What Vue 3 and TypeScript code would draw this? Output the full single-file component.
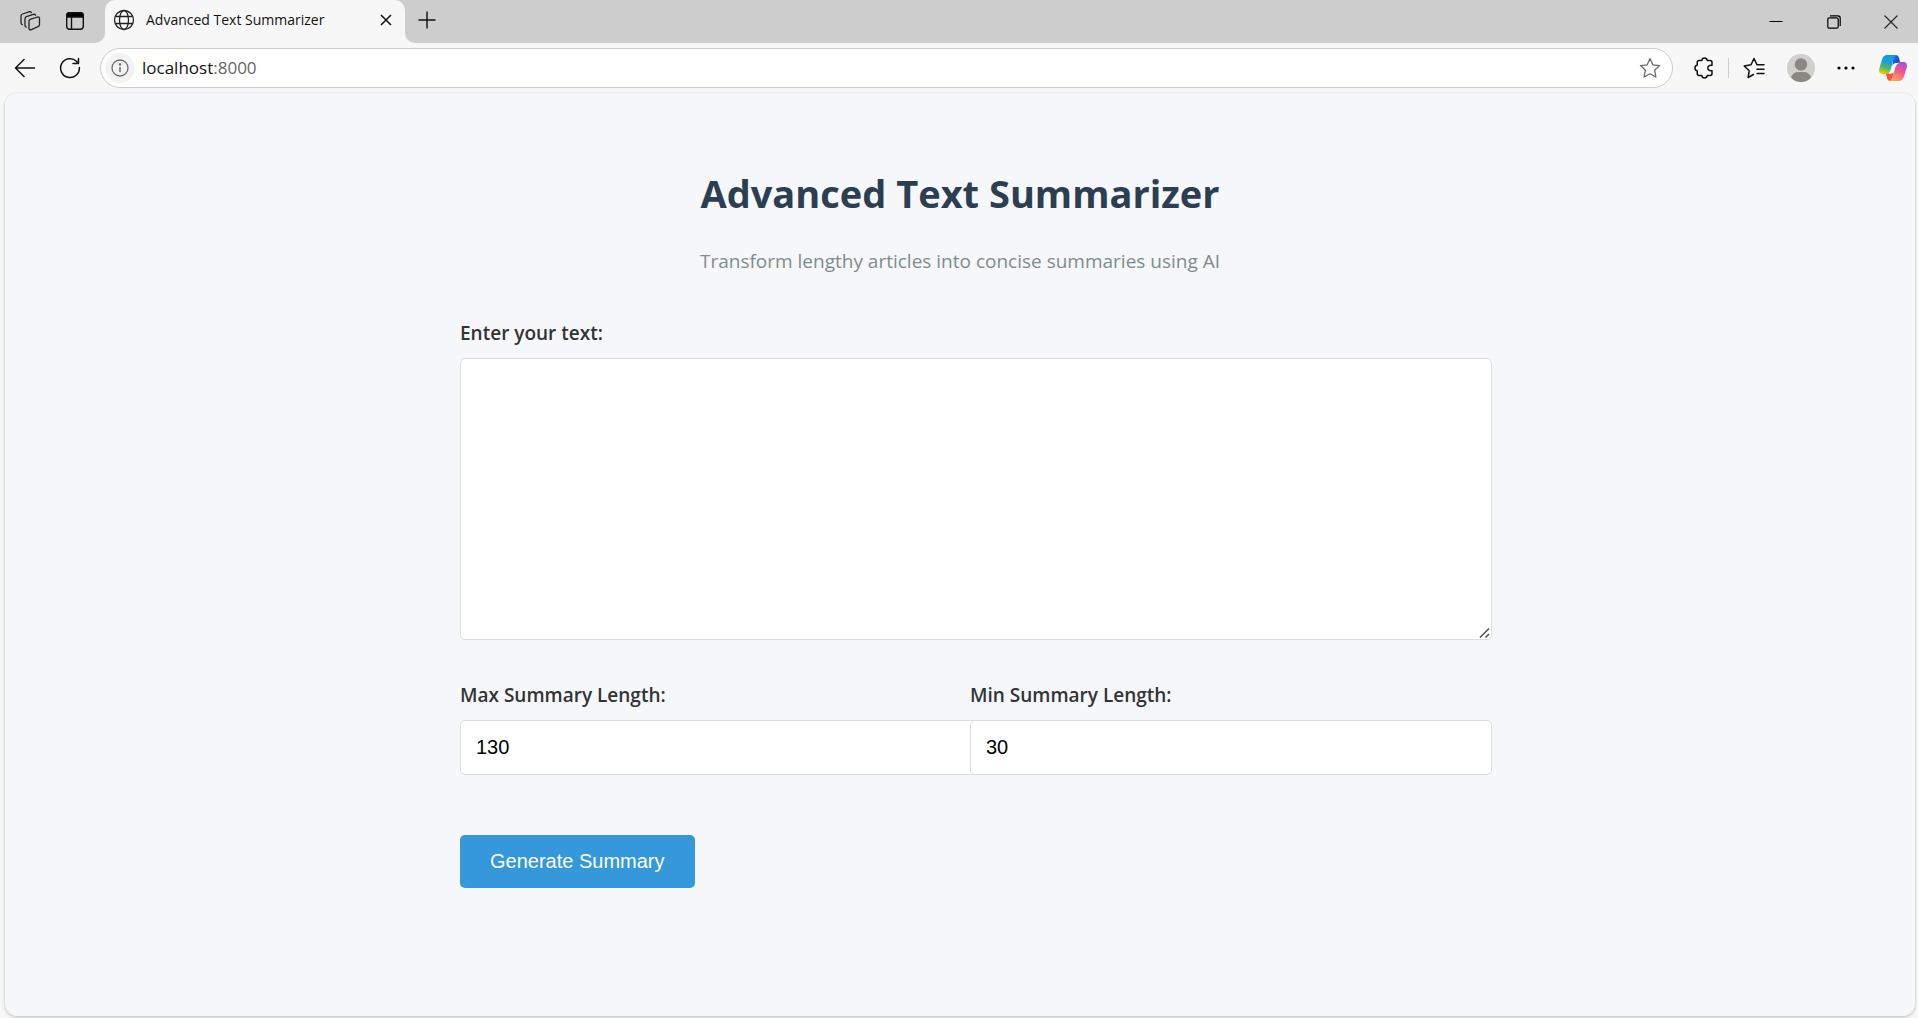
<script setup lang="ts">
import { ref } from 'vue'

const text = ref<string>('')
const maxLength = ref<number>(130)
const minLength = ref<number>(30)
</script>

<template>
  <div class="browser">
    <header class="strip">
      <div class="strip-left">
        <button class="icon-btn" aria-label="Workspaces">
          <svg width="22" height="22" viewBox="0 0 22 22" fill="none" stroke="#222" stroke-width="1.3" stroke-linejoin="round" stroke-linecap="round">
            <path d="M11.2 9.4 18.6 7Q20.5 6.600 20.500 8.500V14.500Q20.500 16 19 16.700L12.500 19.600Q10.200 20.600 10 18.400V11.200Q10 9.900 11.200 9.400Z" />
            <path d="M16.500 5.200Q15.900 3.900 14.300 4.400L7.500 6.700Q6 7.300 6 8.900V15.500Q6 17 7.300 17.200" />
            <path d="M12.300 2.600Q11.700 1.300 10 1.800L3.500 4Q2 4.600 2 6.200V12.800Q2 14.300 3.300 14.600" />
          </svg>
        </button>
        <button class="icon-btn" aria-label="Tab actions menu">
          <svg width="20" height="20" viewBox="0 0 20 20" fill="none" stroke="#111" stroke-width="1.400">
            <rect x="1.700" y="1.700" width="16.600" height="16.600" rx="3" />
            <path d="M1.700 6V4.500Q2 1.700 4.500 1.700H15.500Q18 1.700 18.300 4.500V6Z" fill="#000" />
            <path d="M6.500 6V18" />
          </svg>
        </button>
      </div>
      <div class="tab-cell">
        <div class="tab">
          <svg width="22" height="22" viewBox="0 0 22 22" fill="none" stroke="#222" stroke-width="1.300">
            <circle cx="11" cy="11" r="9.500" />
            <ellipse cx="11" cy="11" rx="4.500" ry="9.500" />
            <path d="M2.400 7.500H19.600M2.400 14.500H19.600" />
          </svg>
          <span class="tab-title">Advanced Text Summarizer</span>
          <button class="tab-close" aria-label="Close tab">
            <svg width="12" height="12" viewBox="0 0 12 12" stroke="#111" stroke-width="1.500"><path d="M1 1 11 11M11 1 1 11" /></svg>
          </button>
        </div>
      </div>
      <div class="strip-right">
        <button class="new-tab" aria-label="New tab">
          <svg width="18" height="18" viewBox="0 0 18 18" stroke="#111" stroke-width="1.400"><path d="M9 .500V17.500M.500 9H17.500" /></svg>
        </button>
        <div class="window-controls">
          <button aria-label="Minimize"><svg width="14" height="14" viewBox="0 0 14 14" stroke="#000"><path d="M.500 6.500H13.500" /></svg></button>
          <button aria-label="Restore">
            <svg width="14" height="14" viewBox="0 0 14 14" fill="none" stroke="#000" stroke-width="1.200">
              <rect x=".800" y="2.800" width="10.400" height="10.400" rx="1.500" /><path d="M3 .800H11Q13.200 .800 13.200 3V11" />
            </svg>
          </button>
          <button aria-label="Close"><svg width="14" height="14" viewBox="0 0 14 14" stroke="#222" stroke-width="1.100"><path d="M.500 .500 13.500 13.500M13.500 .500 .500 13.500" /></svg></button>
        </div>
      </div>
    </header>

    <nav class="toolbar">
      <button class="tool" aria-label="Back">
        <svg width="22" height="20" viewBox="0 0 22 20" fill="none" stroke="#111" stroke-width="1.500" stroke-linecap="round" stroke-linejoin="round"><path d="M20.500 10H1.500M10 1.500 1.500 10 10 18.500" /></svg>
      </button>
      <button class="tool" aria-label="Refresh">
        <svg width="22" height="22" viewBox="0 0 22 22" fill="none" stroke="#111" stroke-width="1.500" stroke-linecap="round" stroke-linejoin="round"><path d="M20.400 10.500A9.400 9.400 0 1 1 17.500 4.300L19 6.200M19.500 1.500V6.500H14" /></svg>
      </button>
      <div class="address">
        <button class="info" aria-label="Site information">
          <svg width="18" height="18" viewBox="0 0 18 18" fill="none" stroke="#6b6b6b" stroke-width="1.300"><circle cx="9" cy="9" r="8" /><path d="M9 8V13" stroke-width="1.500" /><circle cx="9" cy="5.500" r=".600" fill="#6b6b6b" /></svg>
        </button>
        <span class="url">localhost<span class="port">:8000</span></span>
        <button class="favourite" aria-label="Add to favourites">
          <svg width="22" height="22" viewBox="0 0 22 22" fill="none" stroke="#6b6b6b" stroke-width="1.300" stroke-linejoin="round"><path d="M11 1.500 13.800 7.800 20.600 8.600 15.600 13.200 16.900 20 11 16.700 5.100 20 6.400 13.200 1.400 8.600 8.200 7.800Z" /></svg>
        </button>
      </div>
      <div class="actions">
        <button class="tool" aria-label="Extensions">
          <svg width="20" height="22" viewBox="0 0 20 22" fill="none" stroke="#111" stroke-width="1.500" stroke-linejoin="round"><path d="M5 3.500H7.800Q8 1 10.500 1T13.200 3.500H16Q18 3.500 18 5.500V8.300Q13.800 7.900 13.800 11T18 13.700V16.500Q18 18.500 16 18.500H13.200Q13 21 10.500 21T7.800 18.500H5Q3.200 18.500 3.200 16.500V13.700Q1 13.500 1 11T3.200 8.300V5.500Q3.200 3.500 5 3.500Z" /></svg>
        </button>
        <span class="divider"></span>
        <button class="tool" aria-label="Favourites">
          <svg width="22" height="22" viewBox="0 0 22 22" fill="none" stroke="#111" stroke-width="1.500" stroke-linejoin="round" stroke-linecap="round"><path d="M10.500 17.500 5.100 20.500 6.200 13.800 1.200 9 8 7.800 11 1.500 14 7.800H21M14 12.200H21M14 16.600H21" /></svg>
        </button>
        <button class="tool" aria-label="Profile">
          <svg width="28" height="28" viewBox="0 0 28 28"><circle cx="14" cy="14" r="14" fill="#d2d0cc" /><circle cx="14" cy="10.500" r="6.200" fill="#8c8783" /><path d="M4 23.500Q6 18 11 18H17Q22 18 24 23.500Q20 28 14 28T4 23.500Z" fill="#8c8783" /></svg>
        </button>
        <button class="tool" aria-label="Settings and more">
          <svg width="18" height="4" viewBox="0 0 18 4"><circle cx="2" cy="2" r="1.600" /><circle cx="9" cy="2" r="1.600" /><circle cx="16" cy="2" r="1.600" /></svg>
        </button>
        <button class="tool copilot" aria-label="Copilot">
          <svg width="28" height="26" viewBox="0 0 84 78">
            <defs>
              <linearGradient id="cool" x1=".6" y1="0" x2=".3" y2="1"><stop offset="0" stop-color="#1497f0" /><stop offset=".4" stop-color="#1a9fd4" /><stop offset=".7" stop-color="#5cb85c" /><stop offset="1" stop-color="#f2cc08" /></linearGradient>
              <linearGradient id="warm" x1=".8" y1="0" x2=".3" y2="1"><stop offset="0" stop-color="#a04ff0" /><stop offset=".45" stop-color="#f0568c" /><stop offset="1" stop-color="#ffa35c" /></linearGradient>
              <linearGradient id="fold" x1="0" y1="0" x2="1" y2="1"><stop offset="0" stop-color="#1d7be8" /><stop offset="1" stop-color="#1739bb" /></linearGradient>
            </defs>
            <path d="M44 0H50Q58 0 60 9L64 24H56Q46 23 40 33Z" fill="url(#fold)" />
            <path d="M40 78H34Q26 78 24 69L20 54H28Q38 55 44 45Z" fill="#f2583e" />
            <path d="M24 0H52Q46 3 43 14L35 44Q31 57 20 57H10Q-3 56 1 40L9 14Q13 0 24 0Z" fill="url(#cool)" />
            <path d="M60 78H32Q38 75 41 64L49 34Q53 21 64 21H74Q87 22 83 38L75 64Q71 78 60 78Z" fill="url(#warm)" />
            <path d="M52 24H60Q52 27 49 37L45 50Q42 56 34 56H28Q34 53 37 42L40 32Q43 25 52 24Z" fill="#fff" />
          </svg>
        </button>
      </div>
    </nav>

    <main class="page">
      <div class="container">
        <h1>Advanced Text Summarizer</h1>
        <p class="subtitle">Transform lengthy articles into concise summaries using AI</p>
        <form @submit.prevent>
          <div class="field">
            <label for="text">Enter your text:</label>
            <textarea id="text" v-model="text"></textarea>
          </div>
          <div class="row">
            <div class="field">
              <label for="max">Max Summary Length:</label>
              <input id="max" v-model="maxLength" type="number">
            </div>
            <div class="field">
              <label for="min">Min Summary Length:</label>
              <input id="min" v-model="minLength" type="number">
            </div>
          </div>
          <button class="submit" type="submit">Generate Summary</button>
        </form>
      </div>
    </main>
  </div>
</template>

<style>
body {
  margin: 0;
  background: #f7f7f7;
}
</style>

<style scoped>
.browser {
  display: flex;
  flex-direction: column;
  min-height: 100vh;
  background: #f7f7f7;
  font-family: "Segoe UI", "Open Sans", "Noto Sans", sans-serif;
}

button {
  display: flex;
  align-items: center;
  justify-content: center;
  padding: 0;
  border: 0;
  background: none;
}

svg {
  display: block;
  flex: none;
}

.strip {
  display: flex;
  height: 43px;
}

.strip-left {
  box-sizing: border-box;
  display: flex;
  align-items: center;
  gap: 24px;
  width: 105px;
  padding: 0 0 1px 19px;
  background: #cdcdcd;
  border-bottom-right-radius: 10px;
}

.tab-cell {
  width: 300px;
  background: linear-gradient(#cdcdcd 50%, #f7f7f7 50%);
}

.tab {
  box-sizing: border-box;
  display: flex;
  align-items: center;
  height: 100%;
  padding: 0 13px 3px 8px;
  background: #f7f7f7;
  border-radius: 10px 10px 0 0;
}

.tab-title {
  flex: 1;
  margin-left: 11px;
  font-size: 14px;
  line-height: 20px;
  white-space: nowrap;
  color: #111;
}

.strip-right {
  display: flex;
  flex: 1;
  justify-content: space-between;
  background: #cdcdcd;
  border-bottom-left-radius: 10px;
}

.new-tab {
  padding: 0 13px 4px;
}

.window-controls {
  display: flex;
}

.window-controls button {
  width: 58px;
}

.window-controls button:last-child {
  width: 55px;
}

.toolbar {
  display: flex;
  align-items: center;
  gap: 23px;
  height: 50px;
  padding: 0 11px 0 14px;
}

.address {
  box-sizing: border-box;
  display: flex;
  flex: 1;
  align-items: center;
  height: 40px;
  margin: 0 -2px 0 -4px;
  padding: 0 11px 0 4px;
  background: #fff;
  border: 1px solid #cdcdcd;
  border-radius: 20px;
}

.info {
  width: 30px;
  height: 30px;
  border-radius: 50%;
  background: #f3f3f3;
}

.url {
  flex: 1;
  margin-left: 7px;
  font-size: 17px;
  line-height: 24px;
  color: #111;
}

.port {
  color: #666;
}

.actions {
  display: flex;
  align-items: center;
  gap: 22px;
}

.divider {
  width: 1px;
  height: 20px;
  margin: 0 -8px;
  background: #cdcdcd;
}

.copilot {
  margin-left: 2px;
}

.page {
  flex: 1;
  margin: 0 3px 2px 5px;
  background: #f5f7fb;
  border-radius: 12px;
  box-shadow: 0 1px 3px rgba(0, 0, 0, 0.25);
}

.container {
  max-width: 1000px;
  margin: 0 auto;
  padding: 70px 24px 80px;
  color: #333;
}

h1 {
  margin: 0;
  font-size: 38px;
  line-height: 60px;
  font-weight: 700;
  text-align: center;
  color: #2c3e50;
}

.subtitle {
  margin: 22px 0 40px;
  font-size: 19px;
  line-height: 32px;
  text-align: center;
  color: #7f8c8d;
}

label {
  display: block;
  margin-bottom: 9px;
  font-size: 19px;
  line-height: 32px;
  font-weight: 600;
}

textarea,
input {
  box-sizing: content-box;
  display: block;
  width: 100%;
  padding: 15px;
  background: #fff;
  border: 1px solid #ddd;
  border-radius: 5px;
  font-family: Arial, "Liberation Sans", sans-serif;
  font-size: 20px;
  line-height: 23px;
  color: #000;
}

textarea {
  height: 250px;
  resize: vertical;
}

textarea::-webkit-resizer {
  background: url("data:image/svg+xml,%3Csvg xmlns='http://www.w3.org/2000/svg' width='15' height='15' stroke='%23555' stroke-width='1.600'%3E%3Cpath d='M4 13.500 13 4.500M9.500 13.500 13 10'/%3E%3C/svg%3E") right bottom no-repeat;
}

input {
  height: 23px;
}

.row {
  display: flex;
  gap: 20px;
  margin: 39px 0 60px;
}

.row .field {
  flex: 1;
  min-width: 0;
}

.submit {
  padding: 15px 30px;
  background: #3498db;
  border-radius: 5px;
  font-family: Arial, "Liberation Sans", sans-serif;
  font-size: 20px;
  line-height: 23px;
  color: #fff;
}
</style>
